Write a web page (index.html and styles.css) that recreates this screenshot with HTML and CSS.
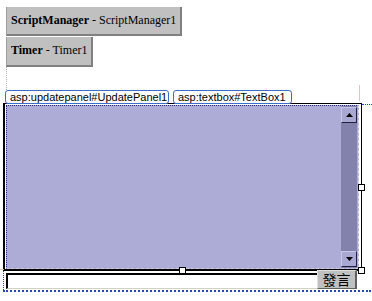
FILE: index.html
```html
<!DOCTYPE html>
<html>
<head>
<meta charset="utf-8">
<link rel="stylesheet" href="styles.css">
</head>
<body>
<div class="page">
  <div class="ctl sm"><b>ScriptManager</b> - ScriptManager1</div>
  <div class="ctl tm"><b>Timer</b> - Timer1</div>
  <div class="gap"></div>
  <div class="tabs">
    <span class="tab t1">asp:updatepanel#UpdatePanel1</span>
    <span class="tab t2">asp:textbox#TextBox1</span>
  </div>
  <div class="panel">
    <div class="ta">
      <div class="ta-body"></div>
      <div class="sb">
        <div class="sbtn"><svg width="7" height="4" viewBox="0 0 7 4"><polygon points="0,4 7,4 3.5,0" fill="#000"/></svg></div>
        <div class="track"></div>
        <div class="sbtn"><svg width="7" height="4" viewBox="0 0 7 4"><polygon points="0,0 7,0 3.5,4" fill="#000"/></svg></div>
      </div>
    </div>
  </div>
  <div class="bottom">
    <div class="input"></div>
    <div class="btn">發言</div>
  </div>
  <div class="guide gv"></div>
  <div class="guide gh"></div>
  <div class="sel-line"></div>
  <div class="handle h1"></div>
  <div class="handle h2"></div>
  <div class="handle h3"></div>
</div>
</body>
</html>
```
FILE: styles.css
```css
html, body {
  margin: 0;
  padding: 0;
  background: #fff;
}
.page {
  position: relative;
  width: 372px;
  height: 301px;
  overflow: hidden;
}
.ctl {
  box-sizing: border-box;
  margin-left: 6px;
  background: #c0c0c0;
  border-left: 1px solid #a0a0a0;
  border-right: 2px solid #808080;
  border-bottom: 2px solid #808080;
  font-family: "Liberation Serif", serif;
  font-size: 12px;
  color: #000;
  padding: 6px 0 0 4px;
  white-space: nowrap;
}
.ctl b { font-weight: bold; }
.sm {
  margin-top: 7px;
  width: 176px;
  height: 29px;
}
.tm {
  margin-top: 1px;
  width: 87px;
  height: 30px;
}
.gap {
  margin-left: 6px;
  height: 23px;
  border-left: 1px dotted #b0b0b0;
}
.tabs {
  display: flex;
  gap: 4px;
  height: 13px;
  padding-left: 5px;
}
.tab {
  box-sizing: border-box;
  height: 14px;
  border: 1px solid #3a6ccc;
  border-radius: 3px;
  background: #fff;
  font-family: "Liberation Sans", sans-serif;
  font-size: 11px;
  line-height: 12px;
  padding: 0 2px 0 4px;
  color: #000;
  white-space: nowrap;
}
.t1 { width: 164px; }
.t2 { width: 119px; }
.panel {
  box-sizing: border-box;
  margin-left: 3px;
  width: 359px;
  height: 168px;
  border: 1px solid #000;
  border-left-width: 2px;
  border-bottom-width: 2px;
  padding: 1px 2px 1px 1px;
}
.ta {
  box-sizing: border-box;
  display: flex;
  height: 164px;
  border: 1px dotted #1c2a80;
  border-right: 1px dashed #dde;
  border-bottom: 1px dashed #ccd;
  background: #acacd6;
}
.ta-body { flex: 1; }
.sb {
  width: 16px;
  margin-right: 1px;
  display: flex;
  flex-direction: column;
  background: #8282ac;
  padding: 1px 0;
}
.sbtn {
  box-sizing: border-box;
  height: 16px;
  background: #a8a8d2;
  border-top: 1px solid #c8c8e8;
  border-left: 1px solid #c8c8e8;
  border-right: 1px solid #202040;
  border-bottom: 1px solid #202040;
  display: flex;
  align-items: center;
  justify-content: center;
}
.track { flex: 1; }
.bottom {
  box-sizing: border-box;
  margin-left: 3px;
  width: 368px;
  height: 21px;
  display: flex;
  align-items: flex-end;
  border-left: 1px dotted #1c4cb0;
  border-bottom: 2px dotted #1c4cb0;
  padding: 0 0 1px 2px;
}
.input {
  box-sizing: border-box;
  width: 311px;
  height: 16px;
  background: #fff;
  border-top: 2px solid #000;
  border-left: 2px solid #000;
  border-bottom: 1px solid #d4d0c8;
}
.btn {
  box-sizing: border-box;
  width: 40px;
  height: 19px;
  background: #c0c0c0;
  border-top: 1px solid #e0e0e0;
  border-left: 1px solid #e0e0e0;
  border-right: 2px solid #606060;
  border-bottom: 1px solid #606060;
  font-family: "Noto Sans CJK TC", sans-serif;
  font-size: 14px;
  line-height: 17px;
  text-align: center;
  color: #000;
}
.guide {
  position: absolute;
  background: #d8c8c8;
}
.gv { left: 359px; top: 85px; width: 1px; height: 16px; }
.gh { left: 0; top: 269px; width: 4px; height: 1px; }
.sel-line {
  position: absolute;
  left: 362px;
  top: 104px;
  width: 10px;
  border-top: 1px dotted #1c4cb0;
}
.handle {
  position: absolute;
  box-sizing: border-box;
  width: 7px;
  height: 7px;
  background: #fff;
  border: 1px solid #000;
}
.h1 { left: 358px; top: 184px; }
.h2 { left: 179px; top: 267px; }
.h3 { left: 358px; top: 267px; }
```
